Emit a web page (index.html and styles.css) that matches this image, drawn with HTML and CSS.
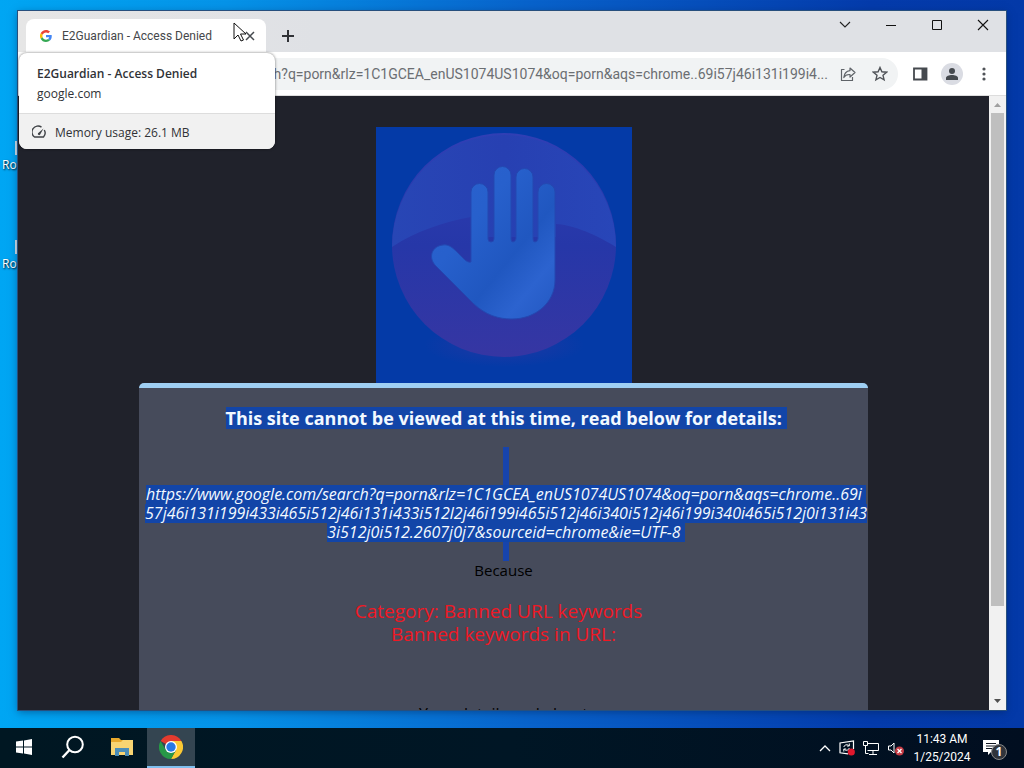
FILE: index.html
```html
<!DOCTYPE html>
<html lang="en">
<head>
<meta charset="utf-8">
<title>E2Guardian - Access Denied</title>
<link rel="stylesheet" href="styles.css">
</head>
<body>
<main class="desktop">
  <div class="shortcut shortcut-first"><i></i><span>Rol</span></div>
  <div class="shortcut shortcut-second"><i></i><span>Ro</span></div>
  <section class="window">
    <header class="tabstrip">
      <div class="tab">
        <svg class="favicon" viewBox="0 0 48 48" width="12" height="12"><path fill="#ea4335" d="M24 9.5c3.5 0 6.700 1.200 9.200 3.600l6.900-6.900C35.900 2.400 30.500 0 24 0 14.600 0 6.500 5.400 2.600 13.200l8 6.200C12.400 13.700 17.700 9.500 24 9.500z"/><path fill="#4285f4" d="M47 24.500c0-1.600-.2-3.100-.4-4.500H24v9h12.900c-.6 3-2.200 5.500-4.700 7.200l7.700 6C44.400 38 47 32 47 24.500z"/><path fill="#fbbc05" d="M10.500 28.600a14 14 0 0 1 0-9.200l-8-6.200a24 24 0 0 0 0 21.600z"/><path fill="#34a853" d="M24 48c6.500 0 11.900-2.100 15.900-5.800l-7.700-6c-2.200 1.500-4.900 2.300-8.200 2.300-6.300 0-11.600-4.200-13.500-9.900l-8 6.200C6.500 42.600 14.600 48 24 48z"/></svg>
        <span class="tab-title">E2Guardian - Access Denied</span>
        <button class="tab-close" aria-label="Close tab"><svg width="10" height="10" viewBox="0 0 10 10"><path d="M1 1l8 8M9 1L1 9" stroke="#45494e" stroke-width="1.500"/></svg></button>
      </div>
      <button class="new-tab" aria-label="New tab"><svg width="14" height="14" viewBox="0 0 14 14"><path d="M7 1v12M1 7h12" stroke="#303236" stroke-width="2"/></svg></button>
      <div class="window-controls">
        <button aria-label="Search tabs"><svg width="12" height="12" viewBox="0 0 12 12"><path d="M1 3l5 5 5-5" fill="none" stroke="#222" stroke-width="1.100"/></svg></button>
        <button aria-label="Minimize"><svg width="12" height="12" viewBox="0 0 12 12"><path d="M1 6.500h10" stroke="#111"/></svg></button>
        <button aria-label="Maximize"><svg width="12" height="12" viewBox="0 0 12 12"><path d="M1.500 1.500h9v9h-9z" fill="none" stroke="#111"/></svg></button>
        <button aria-label="Close"><svg width="12" height="12" viewBox="0 0 12 12"><path d="M1 1l10 10M11 1L1 11" stroke="#111" stroke-width="1.100"/></svg></button>
      </div>
    </header>
    <div class="toolbar">
      <div class="omnibox">
        <input class="address" type="text" aria-label="Address" value="google.com/search?q=porn&amp;rlz=1C1GCEA_enUS1074US1074&amp;oq=porn&amp;aqs=chrome..69i57j46i131i199i4...">
        <button aria-label="Share"><svg width="16" height="16" viewBox="0 0 16 16"><path d="M4.500 3.500H1.500v11h11V11M10 2l5 4.500L10 11V8.500C7 8.300 5 9.300 3.800 11.500 4.200 7.500 6.500 5 10 4.600z" fill="none" stroke="#5f6368" stroke-width="1.200" stroke-linejoin="round"/></svg></button>
        <button aria-label="Bookmark"><svg width="16" height="16" viewBox="0 0 16 16"><path d="M8 1.500l1.900 4.300 4.700.4-3.600 3.100 1.100 4.600L8 11.500l-4.100 2.400L5 9.300 1.400 6.200l4.700-.4z" fill="none" stroke="#505358" stroke-width="1.400"/></svg></button>
      </div>
      <button class="tool" aria-label="Side panel"><svg width="16" height="16" viewBox="0 0 16 16"><path d="M2 2.500h12.500v11H2z" fill="none" stroke="#45494e" stroke-width="1.800"/><path d="M9.500 2h5v12h-5z" fill="#45494e"/></svg></button>
      <button class="tool" aria-label="Profile"><svg width="22" height="22" viewBox="0 0 22 22"><circle cx="11" cy="11" r="11" fill="#dadce3"/><circle cx="11" cy="8" r="3" fill="#45494e"/><path d="M5 17v-2c0-2 3-3 6-3s6 1 6 3v2z" fill="#45494e"/></svg></button>
      <button class="tool" aria-label="Menu"><svg width="16" height="16" viewBox="0 0 16 16" fill="#505358"><circle cx="8" cy="3" r="1.600"/><circle cx="8" cy="8" r="1.600"/><circle cx="8" cy="13" r="1.600"/></svg></button>
    </div>
    <div class="view">
      <article class="page">
        <svg class="stop" viewBox="0 0 256 256" width="256" height="256" role="img" aria-label="Stop hand">
          <defs>
            <linearGradient id="disc" x1="0" y1="0" x2="0" y2="1"><stop offset="0" stop-color="#303fb5"/><stop offset=".5" stop-color="#2637a8"/><stop offset="1" stop-color="#3636a3"/></linearGradient>
            <linearGradient id="shine" x1="0" y1="0" x2="1" y2="0"><stop offset="0" stop-color="#2846b5"/><stop offset=".5" stop-color="#2740b2"/><stop offset="1" stop-color="#2846b8"/></linearGradient>
            <linearGradient id="hand" x1="0" y1="0" x2="1" y2="1"><stop offset="0" stop-color="#2b61ce"/><stop offset=".35" stop-color="#2760cc"/><stop offset=".62" stop-color="#2057c0"/><stop offset=".8" stop-color="#2c63cf"/><stop offset="1" stop-color="#2358c2"/></linearGradient>
            <radialGradient id="glow"><stop offset="0" stop-color="#5433a0" stop-opacity=".35"/><stop offset="1" stop-color="#5433a0" stop-opacity="0"/></radialGradient>
          </defs>
          <rect width="256" height="256" fill="#043aa7"/>
          <ellipse cx="128" cy="218" rx="80" ry="22" fill="url(#glow)"/>
          <circle cx="128" cy="118" r="112" fill="url(#disc)"/>
          <path d="M16 120A112 112 0 0 1 240 120C214 104 194 98 180 97V110H95V90C68 95 40 104 16 120z" fill="url(#shine)"/>
          <path d="M95 135V65a8.500 8.500 0 0 1 17 0v47q0 3 3 3t3-3V48a8.500 8.500 0 0 1 17 0v64q0 3 2 3t3-3V50a8.500 8.500 0 0 1 17 0v62q0 3 2 3t3-3V65a8.500 8.500 0 0 1 17 0v88c0 23-20 39-43 39-14 0-26-4-38-15L59 138C52 130 56 119 67 118c6-1 10 3 16 9 5 5 8 9 12 8z" fill="url(#hand)" stroke="#2448b1"/>
        </svg>
        <div class="card">
          <section class="selected">
            <h1><mark>This site cannot be viewed at this time, read below for details:&nbsp;</mark></h1>
            <div class="blank"></div>
            <div class="blank"></div>
            <p class="url"><mark>https://www.google.com/search?q=porn&amp;rlz=1C1GCEA_enUS1074US1074&amp;oq=porn&amp;aqs=chrome..69i&nbsp;</mark><mark>57j46i131i199i433i465i512j46i131i433i512l2j46i199i465i512j46i340i512j46i199i340i465i512j0i131i43</mark><mark>3i512j0i512.2607j0j7&amp;sourceid=chrome&amp;ie=UTF-8&nbsp;</mark></p>
            <div class="blank"></div>
          </section>
          <p class="because">Because</p>
          <p class="reason">Category: Banned URL keywords&nbsp;&nbsp;<br>Banned keywords in URL:</p>
          <p class="more">Your details and about</p>
        </div>
      </article>
      <div class="scrollbar">
        <svg width="17" height="17" viewBox="0 0 17 17"><path d="M5 11l3.500-4 3.500 4z" fill="#a0a0a0"/></svg>
        <div class="track"><div class="thumb"></div></div>
        <svg width="17" height="17" viewBox="0 0 17 17"><path d="M5 6h7l-3.500 4z" fill="#505050"/></svg>
      </div>
    </div>
    <aside class="hovercard">
      <div class="hover-main"><strong>E2Guardian - Access Denied</strong><span>google.com</span></div>
      <div class="hover-memory"><svg width="14" height="14" viewBox="0 0 14 14"><path d="M9.500 2.100A6 6 0 0 0 2.500 12h9A6 6 0 0 0 12.300 5" fill="none" stroke="#404347" stroke-width="1.400" stroke-linejoin="round"/><path d="M6 8.200L11.500 3.500 8 9.800A1.300 1.300 0 0 1 6 8.200z" fill="#404347"/></svg><span>Memory usage: 26.1 MB</span></div>
    </aside>
  </section>
  <svg class="cursor" width="14" height="21" viewBox="0 0 14 21"><path d="M1 1v16l4-4 3 6 2.500-1-3-6H13z" fill="#fff" stroke="#111"/></svg>
</main>
<footer class="taskbar">
  <button class="task" aria-label="Start"><svg width="16" height="16" viewBox="0 0 16 16" fill="#fff"><path d="M0 2.500l7-1v6H0zM8 1.400L16 0v7.500H8zM0 8.500h7v6l-7-1zM8 8.500h8V16l-8-1.400z"/></svg></button>
  <button class="task" aria-label="Search"><svg width="24" height="24" viewBox="0 0 24 24"><circle cx="14" cy="9.500" r="7.800" fill="none" stroke="#fff" stroke-width="2"/><path d="M8.500 15L1.500 22.500" stroke="#fff" stroke-width="2.400"/></svg></button>
  <button class="task" aria-label="File Explorer"><svg width="22" height="20" viewBox="0 0 22 20"><path d="M0 1h8l2 2h12v15H0z" fill="#e8a92c"/><path d="M0 5h10l2-2h10v15H0z" fill="#f8d472"/><path d="M4 11h14v8h-4v-4H8v4H4z" fill="#4b8db8"/></svg></button>
  <button class="task active" aria-label="Chrome"><svg width="24" height="24" viewBox="0 0 24 24"><path d="M12 12L1.600 6A12 12 0 0 1 22.400 6z" fill="#e33b2e"/><path d="M12 6h10.400A12 12 0 0 1 12 24l5-9z" fill="#fcc934"/><path d="M12 24A12 12 0 0 1 1.600 6l5.200 9 5.200 3 5-3z" fill="#279847"/><circle cx="12" cy="12" r="6" fill="#fff"/><circle cx="12" cy="12" r="4.700" fill="#2878e4"/></svg></button>
  <div class="tray">
    <svg width="12" height="8" viewBox="0 0 12 8"><path d="M1 7l5-5 5 5" fill="none" stroke="#fff" stroke-width="1.300"/></svg>
    <svg width="16" height="16" viewBox="0 0 16 16"><path d="M9 13.800L1 12.800V3l13.500-2v8" fill="none" stroke="#fff" stroke-width="1.200"/><path d="M4.800 7a3 2.800 0 0 1 5-1.500M10.300 3.500v2.500H8M10.300 8a3 2.800 0 0 1-5 1.500M4.800 11.500V9h2.300" fill="none" stroke="#fff"/><circle cx="12.300" cy="12" r="3.600" fill="#e0182d"/></svg>
    <svg width="16" height="16" viewBox="0 0 16 16"><path d="M5 3.500h10.500v7H4.500M10 10.500v4M6 14.500h8M.5 1.500h4v4h-4zM2.500 5.500v8h3" fill="none" stroke="#fff"/></svg>
    <svg width="18" height="16" viewBox="0 0 18 16"><path d="M1.500 6h2.500l3-3v10l-3-3H1.500z" fill="none" stroke="#fff"/><circle cx="12.500" cy="11" r="4.500" fill="#c33a43"/><path d="M10.500 9l4 4M14.500 9l-4 4" stroke="#fff" stroke-width="1.300"/></svg>
    <div class="clock"><span>11:43 AM</span><span>1/25/2024</span></div>
    <div class="notice"><svg width="16" height="16" viewBox="0 0 16 16"><path d="M0 0h16v12H8l-3 3v-3H0z" fill="#fff"/><path d="M3 3.500h10M3 6h10M3 8.500h7" stroke="#101722"/></svg><b>1</b></div>
  </div>
</footer>
</body>
</html>
```
FILE: styles.css
```css
* { box-sizing: border-box; }
body { margin: 0; height: 100vh; display: flex; flex-direction: column; overflow: hidden; font-family: "Open Sans", "Noto Sans", sans-serif; font-size: 12px; color: #303236; }
button { border: 0; padding: 0; background: none; display: flex; align-items: center; justify-content: center; }
svg { display: block; flex: none; }
h1, p { margin: 0; }
.desktop { flex: 1; min-height: 0; display: flex; position: relative; padding: 11px 18px 18px; background: linear-gradient(90deg, #00a6f3 0%, #0593e8 22%, #0862cb 52%, #043bab 85%, #0339a8 100%); }
.shortcut { position: absolute; left: 2px; width: 24px; height: 34px; color: #fff; text-shadow: 1px 1px 2px #000; line-height: 16px; }
.shortcut i { display: block; width: 8px; height: 14px; margin: 0 0 2px 13px; background: #d5e2e9; }
.shortcut-first { top: 141px; }
.shortcut-second { top: 240px; }
.window { flex: 1; min-width: 0; display: flex; flex-direction: column; position: relative; background: #fff; box-shadow: 0 0 0 1px #274f7d, 0 2px 8px #00205080; }
.tabstrip { height: 41px; display: flex; align-items: flex-end; background: linear-gradient(90deg, #e6e6e6, #dfe1e5 30%); padding-left: 8px; }
.tab { width: 240px; height: 33px; display: flex; align-items: center; gap: 10px; padding: 0 11px 0 14px; border-radius: 8px 8px 0 0; background: #fff; }
.tab-title { flex: 1; white-space: nowrap; color: #45474a; font-family: Roboto, sans-serif; }
.new-tab { width: 28px; height: 33px; margin-left: 8px; }
.window-controls { display: flex; margin-left: auto; align-self: flex-start; }
.window-controls button { width: 46px; height: 28px; }
.toolbar { height: 44px; display: flex; align-items: center; padding-right: 6px; border-bottom: 1px solid #ddd; }
.omnibox { flex: 1; min-width: 0; height: 32px; margin-left: 110px; margin-right: 6px; display: flex; align-items: center; border-radius: 16px; background: #f1f3f4; padding-right: 2px; }
.omnibox button { width: 32px; height: 32px; }
.address { flex: 1; min-width: 0; border: 0; padding: 0; margin-right: 4px; background: none; text-align: right; font: 14px Roboto, sans-serif; color: #6b6e72; }
.tool { width: 32px; height: 32px; }
.view { flex: 1; min-height: 0; display: flex; }
.page { flex: 1; min-width: 0; display: flex; flex-direction: column; align-items: center; overflow: hidden; padding-top: 31px; background: #20222b; }
.card { width: 75%; flex: none; border-top: 5px solid #9fcff3; border-radius: 5px 5px 0 0; background: #464b5b; color: #000; text-align: center; white-space: nowrap; padding-top: 19px; font-size: 15px; line-height: 19px; }
.selected { padding-left: 5px; }
mark { display: inline-block; background: #1245a8; color: #f3f9ff; }
h1 { font-size: 18px; line-height: 22px; margin-bottom: 18px; }
.blank { width: 6px; height: 19px; margin: 0 auto; background: #1744ac; }
.url { display: flex; flex-direction: column; align-items: center; font-size: 16px; font-style: italic; }
.because { font-weight: 500; }
.reason { margin-top: 20px; color: #f01824; font-size: 19px; line-height: 23px; }
.more { margin-top: 59px; font-size: 16px; }
.scrollbar { width: 17px; display: flex; flex-direction: column; background: #f1f1f1; }
.track { flex: 1; padding: 0 2px; }
.thumb { height: 85%; background: #bfbfbf; }
.hovercard { position: absolute; left: 1px; top: 42px; width: 256px; border-radius: 8px; overflow: hidden; background: #fff; box-shadow: 0 0 3px #0008; }
.hover-main { display: flex; flex-direction: column; padding: 11px 18px 9px; line-height: 20px; }
.hover-main strong { font-weight: 600; }
.hover-memory { display: flex; align-items: center; gap: 9px; height: 36px; padding: 1px 13px 0; border-top: 1px solid #ddd; background: #f1f1f1; }
.cursor { position: absolute; left: 233px; top: 22px; }
.taskbar { height: 40px; display: flex; background: linear-gradient(90deg, #001722, #001625 50%, #010e20); color: #fff; }
.task { width: 48px; height: 40px; margin-right: 1px; border-bottom: 2px solid transparent; }
.active { background: #344551; border-bottom-color: #7fbfee; }
.tray { margin-left: auto; display: flex; align-items: center; gap: 8px; padding-right: 17px; }
.clock { width: 58px; display: flex; flex-direction: column; align-items: center; font-family: Roboto, sans-serif; line-height: 18px; white-space: nowrap; }
.notice { position: relative; width: 28px; padding-left: 4px; }
.notice b { position: absolute; left: 12px; top: 4px; width: 16px; height: 16px; border: 1px solid #888; border-radius: 50%; background: #30343b; font-size: 12px; line-height: 14px; text-align: center; }
```
